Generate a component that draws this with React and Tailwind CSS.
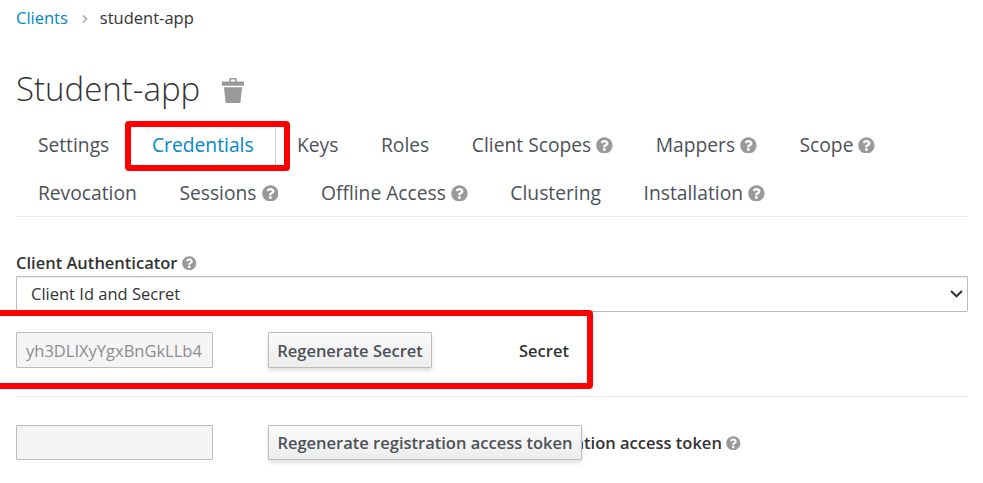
import React from "react";
import { FaQuestionCircle } from "react-icons/fa";

const tabRows = [
  [
    { label: "Settings" },
    { label: "Credentials", active: true },
    { label: "Keys" },
    { label: "Roles" },
    { label: "Client Scopes", help: true },
    { label: "Mappers", help: true },
    { label: "Scope", help: true },
  ],
  [
    { label: "Revocation" },
    { label: "Sessions", help: true },
    { label: "Offline Access", help: true },
    { label: "Clustering" },
    { label: "Installation", help: true },
  ],
];

function Tab({ label, help, active }) {
  return (
    <li
      className={
        active
          ? "flex h-12 items-center border-r border-[#d1d1d1] pl-[21.4px] pr-[21px] text-[#0088ce]"
          : "flex h-12 items-center px-[21.3px] text-[#4d5258]"
      }
    >
      <span>{label}</span>
      {help && <FaQuestionCircle className="ml-[5px] size-[16.8px] text-[#999]" />}
    </li>
  );
}

function TrashIcon() {
  return (
    <svg className="ml-[22px] h-[25px] w-[22px]" viewBox="0 0 22 25" fill="#999">
      <path d="M0 3.4h7.3V1.2Q7.3 0 8.5 0h5Q14.7 0 14.7 1.2v2.2H22V7.8H0zM9 1.6v1.8h4V1.6z" fillRule="evenodd" />
      <path d="M1.9 9.2h18.2L18.4 25H3.8z" />
    </svg>
  );
}

function Button({ children, className }) {
  return (
    <button
      className={`relative flex items-center justify-center whitespace-nowrap rounded-[1px] border border-[#bbb] bg-linear-to-b from-[#fafafa] to-[#ededed] font-semibold text-[#4d5258] shadow-[0_3px_4px_rgba(3,3,3,0.12)] ${className}`}
    >
      {children}
    </button>
  );
}

export default function App() {
  return (
    <div className="relative h-[483px] w-[983px] overflow-hidden bg-white pl-4 pr-[15px] font-['Open_Sans',sans-serif] text-[16.5px] leading-[22px] text-[#333]">
      <nav className="flex items-center pt-[7px]">
        <a className="text-[#0088ce]">Clients</a>
        <svg className="ml-[14px] mr-[12px] mt-[2px] h-[8px] w-[6px]" viewBox="0 0 6 8" fill="none" stroke="#9c9c9c" strokeWidth="1.3">
          <path d="M1 .5 4.6 4 1 7.5" />
        </svg>
        <span>student-app</span>
      </nav>

      <div className="mt-[36px] flex h-12 items-center">
        <h1 className="text-[33px] font-light leading-[48px]">Student-app</h1>
        <div className="pt-[3px]">
          <TrashIcon />
        </div>
      </div>

      <div className="mt-2 h-[96px] border-b border-[#ededed] text-[19.25px]">
        {tabRows.map((row, i) => (
          <ul key={i} className="flex pl-[0.6px]">
            {row.map((tab) => (
              <Tab key={tab.label} {...tab} />
            ))}
          </ul>
        ))}
      </div>

      <div className="mt-[34px] flex h-6 items-center font-semibold">
        Client Authenticator
        <FaQuestionCircle className="ml-[4.4px] size-[14.5px] text-[#999]" />
      </div>
      <div className="mt-px flex h-9 items-center justify-between rounded-[1px] border border-[#bbb] pl-[14px] pr-1 shadow-[inset_0_1px_1px_rgba(3,3,3,0.075)]">
        <span>Client Id and Secret</span>
        <svg className="h-[8px] w-[13px]" viewBox="0 0 13 8" fill="none" stroke="#333" strokeWidth="2">
          <path d="M1 1 6.5 6.3 12 1" />
        </svg>
      </div>

      <div className="mt-5 flex h-9 items-center">
        <div className="flex h-9 w-[197px] items-center rounded-[1px] border border-[#bbb] bg-[#f5f5f5] px-[9px] pt-px text-[#8b8d8f]">
          <span className="overflow-hidden whitespace-nowrap">yh3DLIXyYgxBnGkLLb4</span>
        </div>
        <Button className="ml-[55px] h-9 w-[164px] pt-px">Regenerate Secret</Button>
        <span className="ml-[87px] pt-px font-semibold">Secret</span>
      </div>

      <div className="mt-[28px] border-t border-[#ededed] pt-7">
        <div className="flex h-9 items-start">
          <div className="h-[35px] w-[197px] rounded-[1px] border border-[#bbb] bg-[#f5f5f5]" />
          <Button className="z-10 ml-[55px] h-[35px] w-[314px] shrink-0">Regenerate registration access token</Button>
          <div className="-ml-[63px] flex h-9 items-center whitespace-nowrap font-semibold">
            Registration access token
            <FaQuestionCircle className="ml-[4.4px] size-[14.5px] text-[#999]" />
          </div>
        </div>
      </div>

      <div className="absolute left-[125px] top-[121px] h-[50px] w-[165px] rounded-[4px] border-[6px] border-[#ff0000]" />
      <div className="absolute -left-2 top-[310px] h-[79px] w-[601px] rounded-[4px] border-[6px] border-[#ff0000]" />
    </div>
  );
}
